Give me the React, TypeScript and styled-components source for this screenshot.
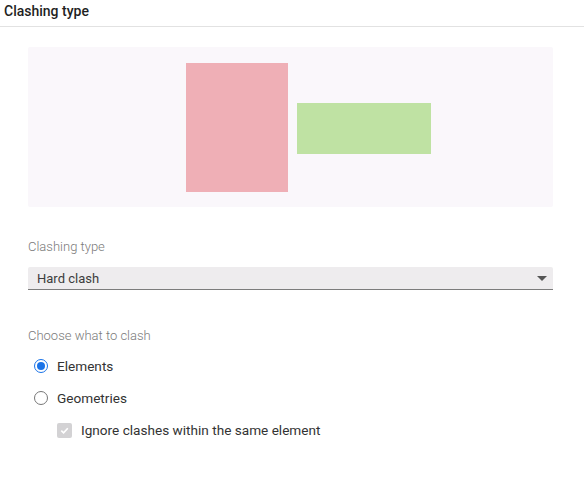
import React from "react";
import styled, { createGlobalStyle } from "styled-components";

const GlobalStyle = createGlobalStyle`
    body {
        margin: 0;
        background: #ffffff;
        font-family: Roboto, "Liberation Sans", sans-serif;
    }
`;

const Page = styled.div`
    width: 584px;
    height: 502px;
    background: #fff;
`;

const Header = styled.div`
    height: 27px;
    padding: 0 4px;
    display: flex;
    align-items: center;
    font-size: 14px;
    font-weight: 500;
    color: #1f1f1f;
    border-bottom: 1px solid #e2e2e2;
    box-sizing: border-box;
    padding-bottom: 4px;
`;

const Body = styled.div`
    padding: 20px 31px 0 28px;
`;

const Preview = styled.div`
    height: 160px;
    background: #faf7fb;
    border-radius: 2px;
    display: flex;
    padding: 16px 0 0 158px;
    box-sizing: border-box;
`;

interface BlockProps {
    w: number;
    h: number;
    color: string;
    top?: number;
}

const Block = styled.div<BlockProps>`
    width: ${(p) => p.w}px;
    height: ${(p) => p.h}px;
    background: ${(p) => p.color};
    margin-top: ${(p) => p.top || 0}px;
    margin-right: 9px;
`;

const FieldLabel = styled.div`
    font-size: 13px;
    font-weight: 300;
    color: #7a7a7a;
    margin-top: 33px;
    height: 14px;
    line-height: 14px;
`;

const Select = styled.div`
    margin-top: 13px;
    height: 22px;
    background: #eeecee;
    border-bottom: 1px solid #7c7c7c;
    border-radius: 2px 2px 0 0;
    display: flex;
    align-items: center;
    justify-content: space-between;
    padding: 0 6px 0 9px;
    font-size: 13px;
    color: #3c3c3c;
`;

const Caret = styled.span`
    width: 0;
    height: 0;
    border-left: 5px solid transparent;
    border-right: 5px solid transparent;
    border-top: 5px solid #555;
`;

const SectionLabel = styled(FieldLabel)`
    margin-top: 39px;
`;

const Options = styled.div`
    display: flex;
    flex-direction: column;
    gap: 18px;
    margin-top: 16px;
`;

interface IndentProps {
    indent?: number;
}

const Option = styled.div<IndentProps>`
    display: flex;
    align-items: center;
    gap: 9px;
    height: 14px;
    margin-left: ${(p) => p.indent || 6}px;
    font-size: 13.6px;
    color: #333;
`;

const Radio = styled.span<{ checked?: boolean }>`
    width: 14px;
    height: 14px;
    box-sizing: border-box;
    border-radius: 50%;
    border: 1px solid ${(p) => (p.checked ? "#1a73e8" : "#777")};
    display: flex;
    align-items: center;
    justify-content: center;
    &::after {
        content: "";
        width: 8px;
        height: 8px;
        border-radius: 50%;
        background: ${(p) => (p.checked ? "#1a73e8" : "transparent")};
    }
`;

const Check = styled.span`
    width: 15px;
    height: 15px;
    border-radius: 2px;
    background: #d3d2d4;
    display: flex;
    align-items: center;
    justify-content: center;
`;

const App = () => {
    return (
        <Page>
            <GlobalStyle />
            <Header>Clashing type</Header>
            <Body>
                <Preview>
                    <Block w={102} h={129} color="#efafb6" />
                    <Block w={134} h={51} color="#bfe2a3" top={40} />
                </Preview>
                <FieldLabel>Clashing type</FieldLabel>
                <Select>
                    Hard clash
                    <Caret />
                </Select>
                <SectionLabel>Choose what to clash</SectionLabel>
                <Options>
                    <Option>
                        <Radio checked />
                        Elements
                    </Option>
                    <Option>
                        <Radio />
                        Geometries
                    </Option>
                    <Option indent={29}>
                        <Check>
                            <svg width="11" height="11" viewBox="0 0 12 12">
                                <path d="M2.5 6.2 L5 8.6 L9.6 3.6" stroke="#fff" strokeWidth="1.8" fill="none" />
                            </svg>
                        </Check>
                        Ignore clashes within the same element
                    </Option>
                </Options>
            </Body>
        </Page>
    );
};

export default App;
